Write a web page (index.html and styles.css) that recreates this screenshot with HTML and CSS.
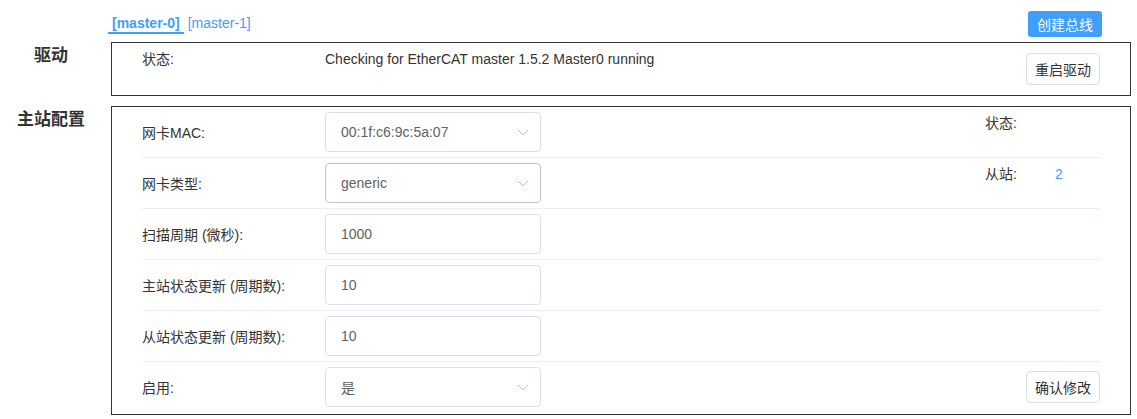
FILE: index.html
```html
<!DOCTYPE html>
<html lang="zh">
<head>
<meta charset="utf-8">
<link rel="stylesheet" href="styles.css">
</head>
<body>
<div class="header">
  <div class="tabs">
    <span class="tab active">[master-0]</span>
    <span class="tab">[master-1]</span>
  </div>
  <button class="btn-primary">创建总线</button>
</div>

<div class="section">
  <div class="section-title">驱动</div>
  <div class="box driver-box">
    <div class="driver-label">状态:</div>
    <div class="driver-value">Checking for EtherCAT master 1.5.2 Master0 running</div>
    <button class="btn driver-btn">重启驱动</button>
  </div>
</div>

<div class="section">
  <div class="section-title">主站配置</div>
  <div class="box config-box">
    <div class="row">
      <div class="label">网卡MAC:</div>
      <div class="field select"><span>00:1f:c6:9c:5a:07</span><svg class="arrow" width="12" height="7" viewBox="0 0 12 7"><path d="M1 1 L6 6 L11 1" fill="none" stroke="#c0c4cc" stroke-width="1"/></svg></div>
      <div class="side"><span class="side-label">状态:</span><span class="side-value"></span></div>
    </div>
    <div class="row">
      <div class="label">网卡类型:</div>
      <div class="field select hover"><span>generic</span><svg class="arrow" width="12" height="7" viewBox="0 0 12 7"><path d="M1 1 L6 6 L11 1" fill="none" stroke="#c0c4cc" stroke-width="1"/></svg></div>
      <div class="side"><span class="side-label">从站:</span><span class="side-value blue">2</span></div>
    </div>
    <div class="row">
      <div class="label">扫描周期 (微秒):</div>
      <div class="field"><span>1000</span></div>
    </div>
    <div class="row">
      <div class="label">主站状态更新 (周期数):</div>
      <div class="field"><span>10</span></div>
    </div>
    <div class="row">
      <div class="label">从站状态更新 (周期数):</div>
      <div class="field"><span>10</span></div>
    </div>
    <div class="row last">
      <div class="label">启用:</div>
      <div class="field select"><span>是</span><svg class="arrow" width="12" height="7" viewBox="0 0 12 7"><path d="M1 1 L6 6 L11 1" fill="none" stroke="#c0c4cc" stroke-width="1"/></svg></div>
      <button class="btn confirm-btn">确认修改</button>
    </div>
  </div>
</div>
</body>
</html>
```

FILE: styles.css
```css
* { box-sizing: border-box; }
body {
  margin: 0;
  font-family: "Liberation Sans", Arial, "Noto Sans CJK SC", sans-serif;
  font-size: 14px;
  color: #333;
  background: #fff;
}
.header {
  display: flex;
  justify-content: space-between;
  align-items: flex-start;
  padding: 11px 35px 0 108px;
  height: 42px;
}
.tabs { display: flex; }
.tab {
  color: #409eff;
  font-size: 14px;
  line-height: 18px;
  padding: 3px 4px 0 4px;
  border-bottom: 2px solid transparent;
  cursor: pointer;
}
.tab.active {
  font-weight: bold;
  border-bottom-color: #409eff;
}
.btn-primary {
  background: #409eff;
  color: #fff;
  border: none;
  border-radius: 3px;
  height: 26px;
  width: 74px;
  padding: 0;
  font-family: "Liberation Sans", "Noto Sans CJK SC", sans-serif;
  font-size: 14px;
}
.section {
  display: flex;
  align-items: flex-start;
  margin-right: 6px;
  margin-bottom: 10px;
}
.section-title {
  width: 102px;
  margin-right: 9px;
  text-align: center;
  font-weight: bold;
  font-size: 17px;
  line-height: 24px;
  margin-top: 2px;
  color: #333;
}
.box {
  flex: 1;
  border: 1px solid #333;
  padding: 0 30px;
}
.driver-box {
  display: flex;
  align-items: flex-start;
  height: 54px;
}
.driver-label {
  width: 183px;
  line-height: 20px;
  margin-top: 6px;
}
.driver-value {
  flex: 1;
  line-height: 20px;
  margin-top: 6px;
}
.btn {
  background: #fff;
  border: 1px solid #dcdfe6;
  border-radius: 4px;
  height: 32px;
  width: 74px;
  padding: 0;
  color: #333;
  font-family: "Liberation Sans", "Noto Sans CJK SC", sans-serif;
  font-size: 14px;
}
.driver-btn { margin-top: 10px; }
.config-box { padding-bottom: 2px; }
.row {
  display: flex;
  align-items: center;
  padding: 5px 0;
  border-bottom: 1px solid #ebeef5;
}
.row.last { border-bottom: none; }
.label {
  width: 183px;
  color: #333;
}
.field {
  width: 216px;
  height: 40px;
  border: 1px solid #dcdfe6;
  border-radius: 4px;
  padding: 0 15px;
  display: flex;
  align-items: center;
  justify-content: space-between;
  color: #606266;
}
.field.hover { border-color: #c0c4cc; }
.arrow { margin-right: -4px; }
.side {
  margin-left: auto;
  width: 115px;
  align-self: flex-start;
  line-height: 22px;
  display: flex;
}
.side-label { width: 70px; }
.blue { color: #409eff; }
.confirm-btn { margin-left: auto; }
```
